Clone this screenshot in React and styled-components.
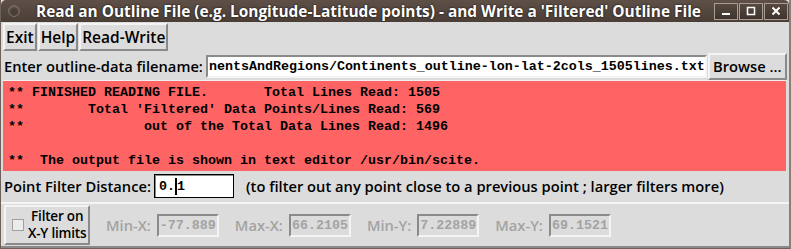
import React from "react";
import styled, { createGlobalStyle } from "styled-components";

const GlobalStyle = createGlobalStyle`
  html, body { margin: 0; padding: 0; background: #dcdcdc; }
  #root { width: 791px; height: 249px; overflow: hidden; }
`;

const LABEL_FONT = `"Open Sans", "DejaVu Sans", sans-serif`;
const MONO_FONT = `"Liberation Mono", "DejaVu Sans Mono", monospace`;

function OutlineFilterWindow() {
  return (
    <Window>
      <TitleBar>
        <CircleButton />
        <Title>
          Read an Outline File (e.g. Longitude-Latitude points) - and Write a
          'Filtered' Outline File
        </Title>
        <WinButtons>
          <WinButton aria-label="minimize">
            <svg width="10" height="10" viewBox="0 0 10 10">
              <rect x="1" y="7" width="8" height="2" fill="#fff" />
            </svg>
          </WinButton>
          <WinButton aria-label="maximize">
            <svg width="10" height="10" viewBox="0 0 10 10">
              <rect x="1.5" y="1.5" width="7" height="7" fill="none" stroke="#fff" strokeWidth="1.5" />
            </svg>
          </WinButton>
          <WinButton aria-label="close">
            <svg width="10" height="10" viewBox="0 0 10 10">
              <path d="M1.5 1.5 L8.5 8.5 M8.5 1.5 L1.5 8.5" stroke="#fff" strokeWidth="2" />
            </svg>
          </WinButton>
        </WinButtons>
      </TitleBar>

      <Toolbar>
        <TkButton>Exit</TkButton>
        <TkButton>Help</TkButton>
        <TkButton>Read-Write</TkButton>
      </Toolbar>

      <FileRow>
        <Label>Enter outline-data filename:</Label>
        <FileEntry
          readOnly
          value="nentsAndRegions/Continents_outline-lon-lat-2cols_1505lines.txt"
        />
        <BrowseButton>Browse ...</BrowseButton>
      </FileRow>

      <Output>
        {`** FINISHED READING FILE.       Total Lines Read: 1505
**        Total 'Filtered' Data Points/Lines Read: 569
**               out of the Total Data Lines Read: 1496

**  The output file is shown in text editor /usr/bin/scite.`}
      </Output>

      <FilterRow>
        <Label>Point Filter Distance:</Label>
        <DistanceEntry>
          0.<Caret />1
        </DistanceEntry>
        <Hint>
          (to filter out any point close to a previous point ; larger filters
          more)
        </Hint>
      </FilterRow>

      <LimitsFrame>
        <CheckButton>
          <CheckBox />
          <CheckText>
            Filter on
            <br />
            X-Y limits
          </CheckText>
        </CheckButton>
        <Limit label="Min-X:" value="-77.889" />
        <Limit label="Max-X:" value="66.2105" />
        <Limit label="Min-Y:" value="7.22889" />
        <Limit label="Max-Y:" value="69.1521" />
      </LimitsFrame>
    </Window>
  );
}

function Limit({ label, value }) {
  return (
    <LimitGroup>
      <DimLabel>{label}</DimLabel>
      <LimitEntry readOnly value={value} />
    </LimitGroup>
  );
}

export default function App() {
  return (
    <>
      <GlobalStyle />
      <OutlineFilterWindow />
    </>
  );
}

const Window = styled.div`
  width: 791px;
  height: 249px;
  box-sizing: border-box;
  display: flex;
  flex-direction: column;
  background: #dcdcdc;
  border-left: 1px solid #6d6159;
  border-right: 2px solid #8a7f77;
  border-bottom: 1px solid #6d6159;
  overflow: hidden;
`;

const TitleBar = styled.div`
  height: 22px;
  flex: none;
  display: flex;
  align-items: center;
  padding: 0 1px 0 6px;
  background: linear-gradient(#5e5047, #4a3e36);
  border-radius: 5px 5px 0 0;
`;

const CircleButton = styled.span`
  width: 10px;
  height: 10px;
  border-radius: 50%;
  background: radial-gradient(circle at 50% 60%, #4a3f38 40%, #6b5f57 70%);
  border: 1px solid #7a6e66;
  margin-left: 1px;
`;

const Title = styled.div`
  flex: 1;
  margin-left: 16px;
  color: #ffffff;
  font: bold 15.4px ${LABEL_FONT};
  white-space: nowrap;
  text-shadow: 0 0 2px #000;
`;

const WinButtons = styled.div`
  display: flex;
  gap: 1px;
`;

const WinButton = styled.div`
  width: 24px;
  height: 17px;
  display: flex;
  align-items: center;
  justify-content: center;
  box-sizing: border-box;
  border: 1px solid #a89c93;
  background: linear-gradient(#56493f, #3e342d);
`;

const raised = `
  border: 2px solid;
  border-color: #f4f4f4 #8a8a8a #8a8a8a #f4f4f4;
`;

const sunken = `
  border: 2px solid;
  border-color: #8a8a8a #f4f4f4 #f4f4f4 #8a8a8a;
`;

const Toolbar = styled.div`
  display: flex;
  gap: 1px;
  padding: 1px 3px 0 2px;
`;

const TkButton = styled.button`
  ${raised}
  height: 28px;
  padding: 0 1px;
  margin: 0;
  background: #dcdcdc;
  color: #000;
  font: 600 15.5px ${LABEL_FONT};
`;

const Label = styled.span`
  font: 600 14.7px ${LABEL_FONT};
  color: #000;
  white-space: nowrap;
`;

const FileRow = styled.div`
  display: flex;
  align-items: center;
  padding: 1px 2px 0 3px;
  height: 28px;
`;

const FileEntry = styled.input`
  ${sunken}
  width: 504px;
  height: 23px;
  box-sizing: border-box;
  margin-left: 3px;
  padding: 0 1px;
  background: #fff;
  font: bold 13.33px ${MONO_FONT};
  color: #000;
  outline: none;
`;

const BrowseButton = styled(TkButton)`
  height: 27px;
  width: 80px;
  margin-left: 1px;
  font-size: 14.7px;
  white-space: nowrap;
`;

const Output = styled.pre`
  margin: 0 3px 0 2px;
  height: 91px;
  flex: none;
  box-sizing: border-box;
  padding: 3px 5px 0;
  background: #ff6464;
  border-top: 1px solid #f0f0f0;
  color: #000;
  font: bold 13.33px/17px ${MONO_FONT};
  overflow: hidden;
`;

const FilterRow = styled.div`
  display: flex;
  align-items: center;
  height: 30px;
  padding: 0 3px 0 3px;
`;

const DistanceEntry = styled.div`
  width: 80px;
  height: 24px;
  box-sizing: border-box;
  margin-left: 3px;
  border: 1px solid #000;
  box-shadow: inset 1px 1px 0 #8a8a8a;
  background: #fff;
  display: flex;
  align-items: center;
  padding-left: 4px;
  font: bold 13.33px ${MONO_FONT};
`;

const Caret = styled.span`
  display: inline-block;
  width: 2px;
  height: 17px;
  background: #000;
`;

const Hint = styled(Label)`
  margin-left: 12px;
`;

const LimitsFrame = styled.div`
  flex: 1;
  display: flex;
  align-items: center;
  gap: 16px;
  margin: 1px 0 0 0;
  padding: 0 3px;
  border-top: 2px solid;
  border-bottom: 2px solid;
  border-color: #f4f4f4 #8a8a8a #8a8a8a #f4f4f4;
`;

const CheckButton = styled.div`
  ${raised}
  width: 86px;
  height: 40px;
  box-sizing: border-box;
  display: flex;
  align-items: center;
  gap: 4px;
  padding-left: 6px;
`;

const CheckBox = styled.span`
  flex: none;
  width: 10px;
  height: 10px;
  border: 1px solid #a0a0a0;
  background: #ececec;
`;

const CheckText = styled.span`
  font: 600 13.5px/17px ${LABEL_FONT};
  text-align: center;
  white-space: nowrap;
  letter-spacing: -0.2px;
`;

const LimitGroup = styled.div`
  display: flex;
  align-items: center;
  gap: 6px;
`;

const DimLabel = styled(Label)`
  color: #a3a3a3;
`;

const LimitEntry = styled.input`
  ${sunken}
  width: 62px;
  height: 23px;
  box-sizing: border-box;
  padding: 0 1px;
  background: #dcdcdc;
  color: #a3a3a3;
  font: bold 13.33px ${MONO_FONT};
  outline: none;
`;
